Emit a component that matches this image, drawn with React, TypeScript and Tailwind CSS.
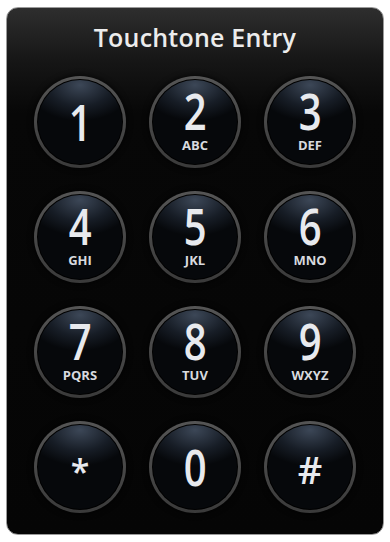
import React from 'react';

interface Key {
  digit: string;
  letters?: string;
}

const keys: Key[] = [
  { digit: '1' },
  { digit: '2', letters: 'ABC' },
  { digit: '3', letters: 'DEF' },
  { digit: '4', letters: 'GHI' },
  { digit: '5', letters: 'JKL' },
  { digit: '6', letters: 'MNO' },
  { digit: '7', letters: 'PQRS' },
  { digit: '8', letters: 'TUV' },
  { digit: '9', letters: 'WXYZ' },
  { digit: '*' },
  { digit: '0' },
  { digit: '#' },
];

function KeyButton({ digit, letters }: Key) {
  return (
    <button className="w-[92px] h-[92px] rounded-full p-[3px] bg-[linear-gradient(180deg,#555555,#3a3a3a)] shadow-[0_0_6px_rgba(0,0,0,0.9)]">
      <div className="w-full h-full rounded-full bg-black p-[1px]">
        <div className="w-full h-full rounded-full bg-[radial-gradient(ellipse_75%_50%_at_50%_6%,#3c4757_0%,#171d26_50%,#06080b_85%)] flex flex-col items-center justify-center text-[#e8eaee]">
          {digit === '*' ? (
            <span className="text-[34px] leading-none font-semibold mt-[8px]">*</span>
          ) : digit === '#' ? (
            <span className="text-[38px] leading-[38px] font-semibold mt-[4px]">#</span>
          ) : (
            <span className="text-[50px] leading-[38px] font-semibold scale-x-[0.8]">{digit}</span>
          )}
          {letters && (
            <span className="text-[13px] leading-[13px] font-bold mt-[9px] text-[#d8dadf]">{letters}</span>
          )}
        </div>
      </div>
    </button>
  );
}

export default function App() {
  return (
    <div
      className="w-[390px] h-[542px] bg-white pl-[6px] pr-[6px] pt-[7px] pb-[7px]"
      style={{ fontFamily: '"Open Sans", "Liberation Sans", sans-serif' }}
    >
      <div className="h-full rounded-[12px] border border-[#9a9a9a] bg-[linear-gradient(180deg,#2e2e2e_0%,#161616_10%,#070707_20%,#050505_100%)] flex flex-col">
        <div className="h-[60px] flex items-center justify-center">
          <h1 className="text-[25px] font-semibold text-[#ececec] tracking-[0.2px]">Touchtone Entry</h1>
        </div>
        <div className="mt-[8px] grid grid-cols-[92px_92px_92px] gap-x-[23px] gap-y-[23px] justify-center">
          {keys.map((k) => (
            <KeyButton key={k.digit} {...k} />
          ))}
        </div>
      </div>
    </div>
  );
}
